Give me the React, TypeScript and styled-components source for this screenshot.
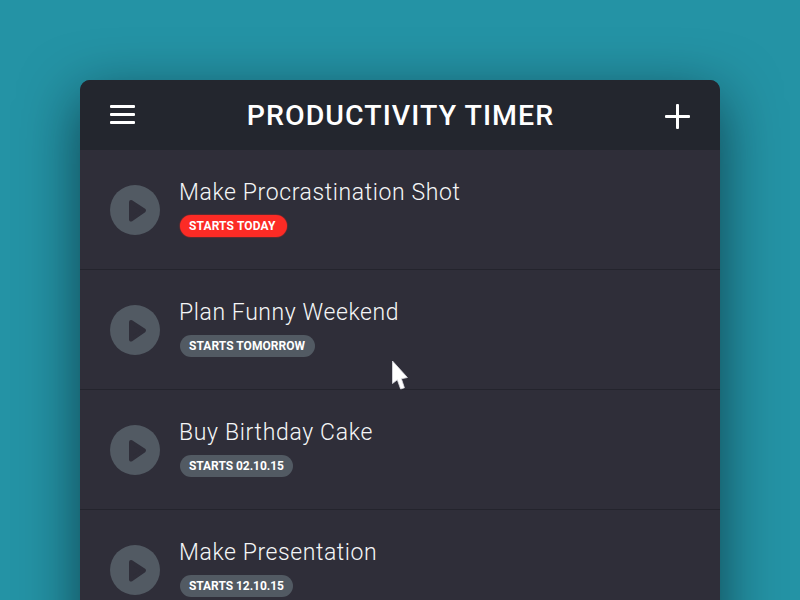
import React from 'react';
import styled, { createGlobalStyle } from 'styled-components';

const GlobalStyle = createGlobalStyle`
  * { box-sizing: border-box; }
  body {
    margin: 0;
    background: #2493a5;
    font-family: Roboto, 'Liberation Sans', sans-serif;
  }
`;

const Page = styled.main`
  position: relative;
  width: 800px;
  height: 600px;
  padding: 80px 80px 0;
  overflow: hidden;
  background: #2493a5;
`;

const Panel = styled.section`
  height: 680px;
  border-radius: 10px;
  overflow: hidden;
  background: #2f2e39;
  box-shadow: 0 17px 58px rgba(0, 12, 20, 0.6);
`;

const Header = styled.header`
  display: flex;
  align-items: center;
  justify-content: space-between;
  height: 70px;
  padding: 0 30px;
  background: #23262e;
`;

const IconButton = styled.button<{ $drop?: number }>`
  display: flex;
  width: 25px;
  height: 26px;
  margin: ${({ $drop = 0 }) => $drop}px 0 0;
  padding: 0;
  border: 0;
  background: none;
`;

const Title = styled.h1`
  margin: 0;
  padding-top: 2px;
  color: #fff;
  font-size: 28.5px;
  font-weight: 500;
  line-height: 34px;
  letter-spacing: 1.05px;
  text-indent: 1px;
  white-space: nowrap;
`;

const TaskList = styled.ul`
  margin: 0;
  padding: 0;
  list-style: none;
`;

const TaskRow = styled.li`
  display: flex;
  gap: 19px;
  height: 120px;
  padding: 28px 30px 0;
  border-bottom: 1px solid #24242d;
`;

const PlayButton = styled.button`
  display: flex;
  flex: none;
  width: 50px;
  height: 50px;
  margin: 7px 0 0;
  padding: 0;
  border: 0;
  border-radius: 50%;
  background: #525a63;
`;

const TaskInfo = styled.div`
  display: flex;
  flex-direction: column;
  align-items: flex-start;
`;

const TaskName = styled.h2<{ $tracking: number }>`
  margin: 0;
  padding-top: 1px;
  color: #f5f6f7;
  font-size: 23px;
  font-weight: 300;
  line-height: 28px;
  letter-spacing: ${({ $tracking }) => $tracking}px;
  white-space: nowrap;
`;

const Badge = styled.span<{ $urgent?: boolean; $width: number; $tracking: number }>`
  width: ${({ $width }) => $width}px;
  height: 22px;
  margin: 8px 0 0 1px;
  padding-left: 9px;
  border-radius: 11px;
  background: ${({ $urgent }) => ($urgent ? '#fc2b25' : '#525a63')};
  box-shadow: ${({ $urgent }) => ($urgent ? '0 0 1px 0.5px rgba(200, 40, 35, 0.6)' : 'none')};
  color: #fff;
  font-size: 12px;
  font-weight: 700;
  line-height: 22px;
  letter-spacing: ${({ $tracking }) => $tracking}px;
  white-space: nowrap;
`;

const Pointer = styled.svg`
  position: absolute;
  left: 390px;
  top: 358px;
`;

interface Task {
  name: string;
  tracking: number;
  due: string;
  dueWidth: number;
  dueTracking: number;
  urgent?: boolean;
}

const tasks: Task[] = [
  { name: 'Make Procrastination Shot', tracking: 0.61, due: 'STARTS TODAY', dueWidth: 107, dueTracking: 0.13, urgent: true },
  { name: 'Plan Funny Weekend', tracking: 0.59, due: 'STARTS TOMORROW', dueWidth: 135, dueTracking: 0.04 },
  { name: 'Buy Birthday Cake', tracking: 0.67, due: 'STARTS 02.10.15', dueWidth: 113, dueTracking: -0.05 },
  { name: 'Make Presentation', tracking: 0.58, due: 'STARTS 12.10.15', dueWidth: 113, dueTracking: -0.05 },
];

export default function App() {
  return (
    <Page>
      <GlobalStyle />
      <Panel>
        <Header>
          <IconButton aria-label="Menu">
            <svg width="25" height="26" fill="#fff">
              <rect x="0" y="3" width="25" height="3" rx="1" />
              <rect x="0" y="11" width="25" height="3" rx="1" />
              <rect x="0" y="19" width="25" height="3" rx="1" />
            </svg>
          </IconButton>
          <Title>PRODUCTIVITY TIMER</Title>
          <IconButton aria-label="Add task" $drop={4}>
            <svg width="25" height="26" fill="#fff">
              <rect x="0" y="11" width="25" height="3" rx="1" />
              <rect x="11" y="0" width="3" height="25" rx="1" />
            </svg>
          </IconButton>
        </Header>
        <TaskList>
          {tasks.map((task) => (
            <TaskRow key={task.name}>
              <PlayButton aria-label="Start">
                <svg width="50" height="50">
                  <path
                    d="M21 17 L34 25.5 L21 34.5 Z"
                    fill="#2f2e39"
                    stroke="#2f2e39"
                    strokeWidth="4"
                    strokeLinejoin="round"
                  />
                </svg>
              </PlayButton>
              <TaskInfo>
                <TaskName $tracking={task.tracking}>{task.name}</TaskName>
                <Badge $urgent={task.urgent} $width={task.dueWidth} $tracking={task.dueTracking}>
                  {task.due}
                </Badge>
              </TaskInfo>
            </TaskRow>
          ))}
        </TaskList>
      </Panel>
      <Pointer width="20" height="34">
        <path
          d="M2.5 3 L2.5 25.5 L7.3 21.8 L10.6 31 L14.4 29.8 L11.4 20.8 L17.4 19.5 Z"
          fill="#fff"
          stroke="#dcdce2"
          strokeWidth="0.8"
          strokeLinejoin="round"
        />
      </Pointer>
    </Page>
  );
}
